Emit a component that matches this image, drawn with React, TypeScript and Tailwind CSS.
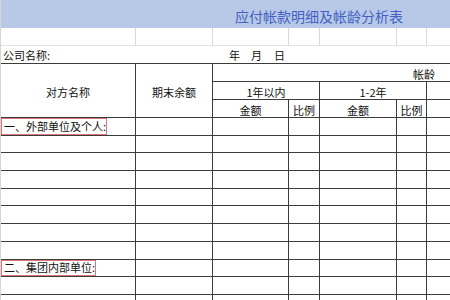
import React from "react";

const COLS = "grid grid-cols-[135px_77px_76px_31px_77px_30px_77px]";
const D = "border-[#3c3c3c]";

function Label({ text }: { text: string }) {
  return (
    <span className="h-full flex items-center border border-[#d97575] pl-[2px] pr-0 whitespace-nowrap">
      {text}
    </span>
  );
}

export default function App() {
  const rows = Array.from({ length: 11 }, (_, i) => i);
  return (
    <div className="w-[450px] h-[300px] overflow-hidden bg-white flex font-['Noto_Sans_CJK_SC','Noto_Sans_CJK_JP',sans-serif] text-[11px] leading-none text-[#111]">
      <div className="w-px shrink-0 bg-[#d6d6d6]" />
      <div className="w-[449px] shrink-0 flex flex-col overflow-hidden">
        {/* title band */}
        <div className="h-[28px] shrink-0 bg-[#b7c9e6] flex items-center pl-[234px] pt-[3px] text-[14px] text-[#4560c4] whitespace-nowrap">
          应付帐款明细及帐龄分析表
        </div>
        {/* blank row */}
        <div className={`${COLS} h-[18px] shrink-0 border-b border-[#e2e2e2]`}>
          {[0, 1, 2, 3, 4, 5, 6].map((i) => (
            <div key={i} className="border-r border-[#dadada]" />
          ))}
        </div>
        {/* company row */}
        <div className={`h-[18px] shrink-0 border-b ${D} flex items-end pb-[2px] whitespace-nowrap`}>
          <span className="pl-[2px]">公司名称:</span>
          <span className="ml-[179px]">年</span>
          <span className="ml-[11px]">月</span>
          <span className="ml-[12px]">日</span>
        </div>
        {/* header */}
        <div className={`${COLS} grid-rows-[18px_18px_18px] shrink-0`}>
          <div className={`row-span-3 border-r border-b ${D} flex items-center justify-center pt-[3px]`}>对方名称</div>
          <div className={`row-span-3 border-r border-b ${D} flex items-center justify-center pt-[3px]`}>期末余额</div>
          <div className={`col-span-5 border-b ${D} flex items-end pb-[1px] pl-[200px] whitespace-nowrap`}>帐龄</div>
          <div className={`col-span-2 border-r border-b ${D} flex items-end justify-center pb-[1px]`}>1年以内</div>
          <div className={`col-span-2 border-r border-b ${D} flex items-end justify-center pb-[1px]`}>1-2年</div>
          <div className={`border-r border-b ${D}`} />
          <div className={`border-r border-b ${D} flex items-end justify-center pb-[1px]`}>金额</div>
          <div className={`border-r border-b ${D} flex items-end justify-center pb-[1px]`}>比例</div>
          <div className={`border-r border-b ${D} flex items-end justify-center pb-[1px]`}>金额</div>
          <div className={`border-r border-b ${D} flex items-end justify-center pb-[1px]`}>比例</div>
          <div className={`border-r border-b ${D} flex items-end justify-center pb-[1px]`}>金额</div>
        </div>
        {/* data rows */}
        {rows.map((r) => (
          <div key={r} className={`${COLS} h-[17.7px] shrink-0 border-b ${D}`}>
            <div className={`border-r ${D} flex items-stretch`}>
              {r === 0 && <Label text="一、外部单位及个人:" />}
              {r === 8 && <Label text="二、集团内部单位:" />}
            </div>
            {[1, 2, 3, 4, 5, 6].map((c) => (
              <div key={c} className={`border-r ${D}`} />
            ))}
          </div>
        ))}
      </div>
    </div>
  );
}
